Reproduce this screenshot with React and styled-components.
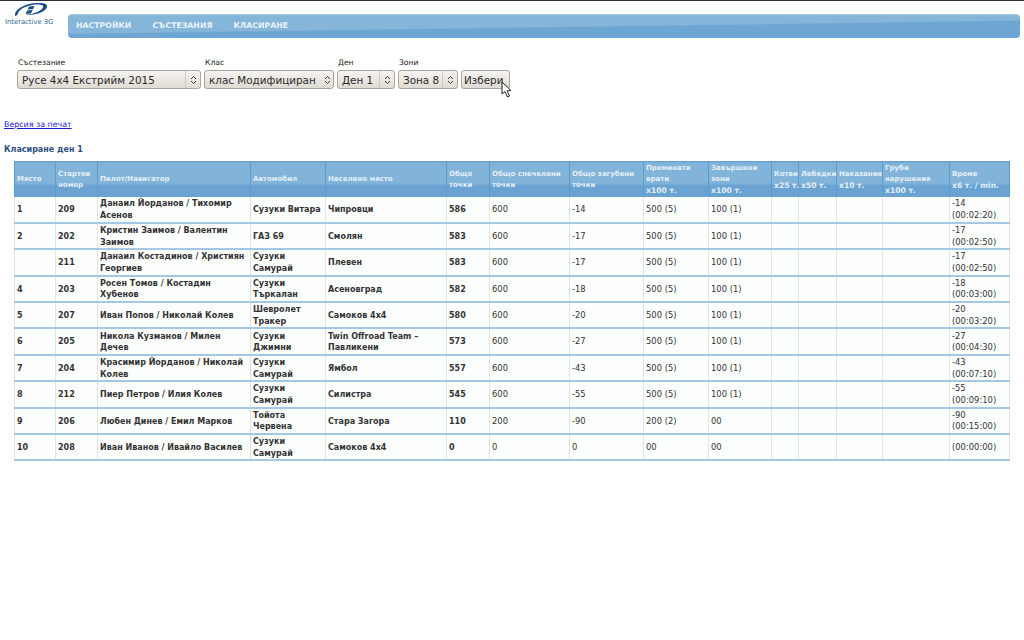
import React from 'react';
import styled, { createGlobalStyle } from 'styled-components';

const GlobalStyle = createGlobalStyle`
  html, body {
    margin: 0;
    padding: 0;
    background: #fff;
  }
  body {
    font-family: "DejaVu Sans", Verdana, sans-serif;
    color: #222;
  }
`;

const Page = styled.div`
  position: relative;
  width: 1024px;
  height: 640px;
  overflow: hidden;
  border-top: 1px solid #2a2f33;
  box-sizing: border-box;
`;

const TopBar = styled.header`
  display: flex;
  align-items: flex-start;
  height: 42px;
  padding-right: 4px;
`;

const LogoBox = styled.div`
  width: 68px;
  flex: none;
  display: flex;
  flex-direction: column;
  align-items: flex-start;
  padding: 1px 0 0 5px;
  font-size: 6.8px;
  line-height: 8px;
  color: #2c5f8e;
  box-sizing: border-box;
`;

const LogoSvg = styled.svg`
  margin-left: 9px;
  margin-bottom: 1px;
`;

const Nav = styled.nav`
  flex: 1;
  height: 24px;
  margin-top: 13px;
  display: flex;
  align-items: center;
  gap: 21px;
  padding: 0 0 2px 8px;
  border-radius: 4px;
  border-top: 1px solid #a7cde6;
  box-sizing: border-box;
  background: linear-gradient(179.2deg, #86b5da 0 50%, #6ea6d3 54% 100%);
`;

const NavItem = styled.a`
  font-size: 7.8px;
  font-weight: bold;
  color: #e9f2f9;
`;

const FilterForm = styled.form`
  display: flex;
  align-items: flex-end;
  gap: 3px;
  padding: 14px 0 0 17px;
`;

const Field = styled.div`
  display: flex;
  flex-direction: column;
`;

const FieldLabel = styled.label`
  font-size: 7.6px;
  line-height: 12px;
  height: 13px;
  padding-left: 1px;
  color: #222;
`;

const SelectBox = styled.div`
  display: flex;
  align-items: center;
  width: ${p => p.$w}px;
  height: 19px;
  box-sizing: border-box;
  border: 1px solid #a9a59d;
  border-radius: 3px;
  background: linear-gradient(#f6f4f1, #dfdbd3);
  font-size: 10.4px;
  color: #2b2b2b;
  padding-left: 4px;
  white-space: nowrap;
  overflow: hidden;
`;

const SelectText = styled.span`
  flex: 1;
  overflow: hidden;
`;

const SelectArrow = styled.span`
  flex: none;
  width: ${p => (p.$plain ? 12 : 14)}px;
  height: 100%;
  display: flex;
  align-items: center;
  justify-content: center;
  border-left: ${p => (p.$plain ? 'none' : '1px solid #cfcbc3')};
`;

const SubmitButton = styled.button`
  width: 49px;
  height: 19px;
  padding: 0 0 0 2px;
  text-align: left;
  box-sizing: border-box;
  border: 1px solid #a9a59d;
  border-radius: 3px;
  background: linear-gradient(#f6f4f1, #dfdbd3);
  font-family: inherit;
  font-size: 10.4px;
  color: #2b2b2b;
  overflow: hidden;
`;

const Cursor = styled.svg`
  position: absolute;
  left: 501px;
  top: 80px;
`;

const PrintLink = styled.a`
  display: block;
  margin: 30px 0 0 4px;
  font-size: 7.9px;
  line-height: 12px;
  color: #1a1ad6;
  text-decoration: underline;
`;

const SectionTitle = styled.h2`
  margin: 13px 0 0 4px;
  font-size: 8px;
  line-height: 12px;
  font-weight: bold;
  color: #2d4f80;
`;

const Table = styled.table`
  margin: 5px 0 0 14px;
  width: 995px;
  table-layout: fixed;
  border-collapse: collapse;
  font-size: 8.4px;
  line-height: 11.5px;
`;

const HeadRow = styled.tr`
  height: 35px;
`;

const HeadCell = styled.th`
  padding: 1px 2px 0;
  text-align: left;
  font-size: 7px;
  line-height: 11px;
  font-weight: bold;
  color: #e4eff8;
  border-top: 1px solid #6ba3d3;
  border-left: 1px solid #5f9bcc;
  border-right: 1px solid #5f9bcc;
  background: linear-gradient(#82b3d9 0 60%, #6aa3d2 66% 100%);
  white-space: nowrap;
`;

const HeadLine = styled.div`
  font-size: ${p => (p.$unit ? 7.6 : 7)}px;
`;

const Row = styled.tr`
  height: 26.4px;
`;

const Cell = styled.td`
  padding: 1px 2px 0;
  border-left: 1px solid #dde4ea;
  border-right: 1px solid #dde4ea;
  border-bottom: 2px solid #a3c7e4;
  font-size: ${p => (p.$bold ? 8 : 8.4)}px;
  font-weight: ${p => (p.$bold ? 'bold' : 'normal')};
  color: #333;
  background: #fdfefe;
`;

const LogoMark = () => (
  <LogoSvg width="34" height="15" viewBox="0 0 34 15">
    <path
      d="M1 14 C0 8 9 2 22 1 C30 0.5 34 2 33 5 C32 9 24 13 14 13 L11 13 C20 12 28 9 29 5 C30 3 26 2 21 2.6 C11 4 4 8 3.5 13 Z"
      fill="#1d4f86"
    />
    <path d="M15 4.5 L20.5 4 L17 11.5 L11.5 12 Z" fill="#1d4f86" />
    <path d="M12 7.6 L19 7.2 L18.6 8.1 L11.6 8.5 Z" fill="#fff" />
  </LogoSvg>
);

const UpDown = () => (
  <svg width="7" height="10" viewBox="0 0 7 10">
    <path d="M1 4 L3.5 1.5 L6 4 M1 6 L3.5 8.5 L6 6" fill="none" stroke="#3a3a3a" strokeWidth="1" />
  </svg>
);

const widths = [41, 42, 153, 75, 121, 43, 80, 74, 65, 63, 27, 38, 46, 67, 60];

const headers = [
  ['Място'],
  ['Стартов', 'номер'],
  ['Пилот/Навигатор'],
  ['Автомобил'],
  ['Населено място'],
  ['Общо', 'точки'],
  ['Общо спечелени', 'точки'],
  ['Общо загубени', 'точки'],
  ['Преминати', 'врати', 'x100 т.'],
  ['Завършени', 'зони', 'x100 т.'],
  ['Котви', 'x25 т.'],
  ['Лебедки', 'x50 т.'],
  ['Наказания', 'x10 т.'],
  ['Груби', 'нарушения', 'x100 т.'],
  ['Време', 'x6 т. / min.'],
];

const rows = [
  ['1', '209', 'Данаил Йорданов / Тихомир Асенов', 'Сузуки Витара', 'Чипровци', '586', '600', '-14', '500 (5)', '100 (1)', '-14', '(00:02:20)'],
  ['2', '202', 'Кристин Заимов / Валентин Заимов', 'ГАЗ 69', 'Смолян', '583', '600', '-17', '500 (5)', '100 (1)', '-17', '(00:02:50)'],
  ['', '211', 'Данаил Костадинов / Християн Георгиев', 'Сузуки Самурай', 'Плевен', '583', '600', '-17', '500 (5)', '100 (1)', '-17', '(00:02:50)'],
  ['4', '203', 'Росен Томов / Костадин Хубенов', 'Сузуки Търкалан', 'Асеновград', '582', '600', '-18', '500 (5)', '100 (1)', '-18', '(00:03:00)'],
  ['5', '207', 'Иван Попов / Николай Колев', 'Шевролет Тракер', 'Самоков 4x4', '580', '600', '-20', '500 (5)', '100 (1)', '-20', '(00:03:20)'],
  ['6', '205', 'Никола Кузманов / Милен Дечев', 'Сузуки Джимни', 'Twin Offroad Team – Павликени', '573', '600', '-27', '500 (5)', '100 (1)', '-27', '(00:04:30)'],
  ['7', '204', 'Красимир Йорданов / Николай Колев', 'Сузуки Самурай', 'Ямбол', '557', '600', '-43', '500 (5)', '100 (1)', '-43', '(00:07:10)'],
  ['8', '212', 'Пиер Петров / Илия Колев', 'Сузуки Самурай', 'Силистра', '545', '600', '-55', '500 (5)', '100 (1)', '-55', '(00:09:10)'],
  ['9', '206', 'Любен Динев / Емил Марков', 'Тойота Червена', 'Стара Загора', '110', '200', '-90', '200 (2)', '00', '-90', '(00:15:00)'],
  ['10', '208', 'Иван Иванов / Ивайло Василев', 'Сузуки Самурай', 'Самоков 4x4', '0', '0', '0', '00', '00', '', '(00:00:00)'],
];

const App = () => {
  return (
    <Page>
      <GlobalStyle />
      <TopBar>
        <LogoBox>
          <LogoMark />
          Interactive 3G
        </LogoBox>
        <Nav>
          <NavItem>НАСТРОЙКИ</NavItem>
          <NavItem>СЪСТЕЗАНИЯ</NavItem>
          <NavItem>КЛАСИРАНЕ</NavItem>
        </Nav>
      </TopBar>

      <FilterForm>
        <Field>
          <FieldLabel>Състезание</FieldLabel>
          <SelectBox $w={184}>
            <SelectText>Русе 4x4 Екстрийм 2015</SelectText>
            <SelectArrow><UpDown /></SelectArrow>
          </SelectBox>
        </Field>
        <Field>
          <FieldLabel>Клас</FieldLabel>
          <SelectBox $w={130}>
            <SelectText>клас Модифициран</SelectText>
            <SelectArrow $plain><UpDown /></SelectArrow>
          </SelectBox>
        </Field>
        <Field>
          <FieldLabel>Ден</FieldLabel>
          <SelectBox $w={58}>
            <SelectText>Ден 1</SelectText>
            <SelectArrow><UpDown /></SelectArrow>
          </SelectBox>
        </Field>
        <Field>
          <FieldLabel>Зони</FieldLabel>
          <SelectBox $w={60}>
            <SelectText>Зона 8</SelectText>
            <SelectArrow><UpDown /></SelectArrow>
          </SelectBox>
        </Field>
        <SubmitButton type="button">Избери</SubmitButton>
      </FilterForm>

      <Cursor width="12" height="18" viewBox="0 0 12 18">
        <path d="M1 1 L1 13 L4 10.5 L6.5 16 L8.5 15 L6.2 9.8 L10 9.5 Z" fill="#fff" stroke="#222" strokeWidth="1" />
      </Cursor>

      <PrintLink href="#">Версия за печат</PrintLink>
      <SectionTitle>Класиране ден 1</SectionTitle>

      <Table>
        <colgroup>
          {widths.map((w, i) => <col key={i} width={w} />)}
        </colgroup>
        <thead>
          <HeadRow>
            {headers.map((lines, i) => (
              <HeadCell key={i}>
                {lines.map((l, j) => <HeadLine key={j} $unit={l.startsWith('x')}>{l}</HeadLine>)}
              </HeadCell>
            ))}
          </HeadRow>
        </thead>
        <tbody>
          {rows.map(r => (
            <Row key={r[1]}>
              <Cell $bold>{r[0]}</Cell>
              <Cell $bold>{r[1]}</Cell>
              <Cell $bold>{r[2]}</Cell>
              <Cell $bold>{r[3]}</Cell>
              <Cell $bold>{r[4]}</Cell>
              <Cell $bold>{r[5]}</Cell>
              <Cell>{r[6]}</Cell>
              <Cell>{r[7]}</Cell>
              <Cell>{r[8]}</Cell>
              <Cell>{r[9]}</Cell>
              <Cell />
              <Cell />
              <Cell />
              <Cell />
              <Cell>
                {r[10] && <div>{r[10]}</div>}
                <div>{r[11]}</div>
              </Cell>
            </Row>
          ))}
        </tbody>
      </Table>
    </Page>
  );
};

export default App;
